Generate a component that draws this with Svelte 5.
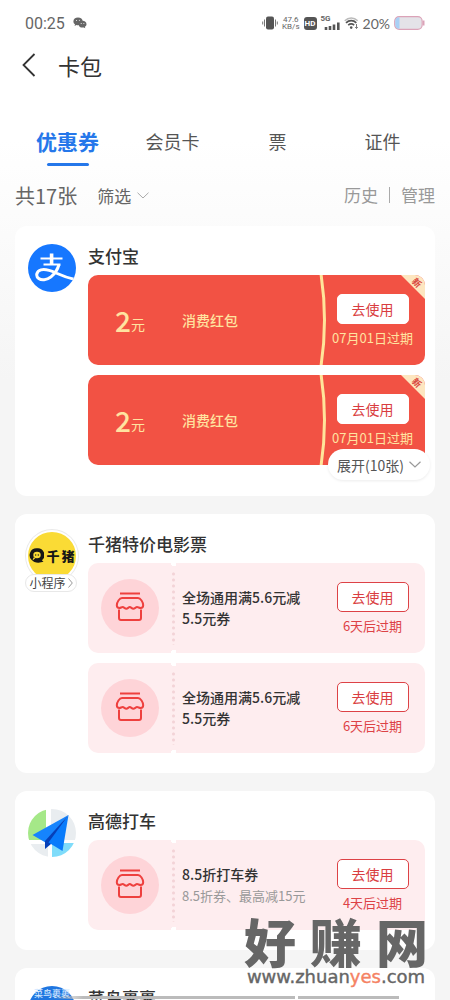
<script lang="ts">
  type Coupon = {
    kind: 'cash' | 'shop'
    title: string
    note?: string
    expiry: string
  }

  type Merchant = {
    id: string
    name: string
    mini?: boolean
    more?: number
    coupons: Coupon[]
  }

  const tabs = ['优惠券', '会员卡', '票', '证件']
  let active = $state(0)

  const merchants: Merchant[] = [
    {
      id: 'alipay',
      name: '支付宝',
      more: 10,
      coupons: [
        { kind: 'cash', title: '消费红包', expiry: '07月01日过期' },
        { kind: 'cash', title: '消费红包', expiry: '07月01日过期' },
      ],
    },
    {
      id: 'qianzhu',
      name: '千猪特价电影票',
      mini: true,
      coupons: [
        { kind: 'shop', title: '全场通用满5.6元减5.5元券', expiry: '6天后过期' },
        { kind: 'shop', title: '全场通用满5.6元减5.5元券', expiry: '6天后过期' },
      ],
    },
    {
      id: 'gaode',
      name: '高德打车',
      coupons: [
        { kind: 'shop', title: '8.5折打车券', note: '8.5折券、最高减15元', expiry: '4天后过期' },
      ],
    },
    { id: 'cainiao', name: '菜鸟裹裹', coupons: [] },
  ]
</script>

<div class="screen">
  <div class="status">
    <span class="clock">00:25</span>
    <svg width="14" height="12" viewBox="0 0 14 12">
      <path d="M5 0.5C2.3 0.5 0.4 2.2 0.4 4.4c0 1.2 0.6 2.2 1.6 2.9L1.6 8.9l1.8-0.9c0.5 0.1 1 0.2 1.6 0.2 2.7 0 4.7-1.7 4.7-3.9S7.7 0.5 5 0.5z" fill="#666" />
      <path d="M9.5 3.8c-2.3 0-4 1.5-4 3.4s1.7 3.4 4 3.4c0.5 0 0.9-0.1 1.3-0.2l1.5 0.9-0.4-1.5c1-0.6 1.6-1.5 1.6-2.6 0-1.9-1.7-3.4-4-3.4z" fill="#666" />
      <circle cx="3.5" cy="3.4" r="0.5" fill="#fff" /><circle cx="6.4" cy="3.2" r="0.5" fill="#fff" />
      <circle cx="8.2" cy="6.4" r="0.5" fill="#fff" /><circle cx="10.9" cy="6.4" r="0.5" fill="#fff" />
    </svg>
    <div class="signals">
      <svg width="16" height="14" viewBox="0 0 16 14">
        <rect x="4" y="0.5" width="8" height="13" rx="2" fill="#555" />
        <path d="M2.5 3.5v7M13.5 3.5v7M0.7 5.5v3M15.3 5.5v3" stroke="#777" stroke-width="1" />
      </svg>
      <span class="speed"><span>47.6</span><span>KB/s</span></span>
      <span class="hd">HD</span>
      <span class="cell">
        <span class="gen">5G</span>
        <svg width="16" height="8" viewBox="0 0 16 8">
          <path d="M2 8V5M6 8V4M10 8V2.5M14.3 8V0.5" stroke="#555" stroke-width="2.6" />
        </svg>
      </span>
      <svg width="15" height="12" viewBox="0 0 15 12">
        <path d="M0.7 3.8C4.5 0 10 0 13.7 3.8" fill="none" stroke="#bbb" stroke-width="1.4" />
        <path d="M2 5.8C5 3 9.5 3 12.3 5.8M4.2 8.2c1.8-1.5 4.2-1.5 6 0" fill="none" stroke="#555" stroke-width="1.7" />
        <circle cx="7.2" cy="10.6" r="1.3" fill="#555" />
        <path d="M12.5 7v4.5M11.2 10l1.3 1.5L13.8 10" fill="none" stroke="#777" stroke-width="1" />
      </svg>
      <span class="percent">20%</span>
      <svg width="31" height="14" viewBox="0 0 31 14">
        <rect x="0.7" y="0.7" width="27.5" height="12.6" rx="4.5" fill="#e4e3e8" stroke="#dba3b8" stroke-width="1.2" />
        <path d="M5.5 1.3H5A3.8 3.8 0 0 0 1.3 5v4A3.8 3.8 0 0 0 5 12.7h0.5z" fill="#a9d0f5" />
        <path d="M29.7 4.5v5" stroke="#dba3b8" stroke-width="1.6" />
      </svg>
    </div>
  </div>

  <header class="bar">
    <button class="back" aria-label="返回">
      <svg width="14" height="24" viewBox="0 0 14 24">
        <path d="M12.5 1L1.5 12l11 11" fill="none" stroke="#333" stroke-width="1.8" />
      </svg>
    </button>
    <h1>卡包</h1>
  </header>

  <nav class="tabs">
    {#each tabs as tab, i}
      <button class="tab" class:active={active === i} onclick={() => (active = i)}>{tab}</button>
    {/each}
  </nav>

  <div class="filters">
    <span class="total">共17张</span>
    <button class="filter">
      筛选
      <svg width="12" height="7" viewBox="0 0 12 7">
        <path d="M0.5 0.7L6 6l5.5-5.3" fill="none" stroke="#aaa" />
      </svg>
    </button>
    <div class="links">
      <a href="#history">历史</a>
      <a href="#manage">管理</a>
    </div>
  </div>

  <main class="list">
    {#each merchants as m}
      <section class="card" class:has-more={m.more}>
        <div class="brand">
          {#if m.id === 'alipay'}
            <svg class="logo" viewBox="0 0 48 48">
              <clipPath id="alipay-clip"><circle cx="24" cy="24" r="24" /></clipPath>
              <circle cx="24" cy="24" r="24" fill="#1677ff" />
              <g fill="none" stroke="#fff" clip-path="url(#alipay-clip)">
                <path d="M12.5 14.5h22M15.5 20.5h17" stroke-width="2.2" />
                <path d="M23.6 9.5v11" stroke-width="3.6" />
                <path d="M31 20.5c-1.5 5.5-4.5 9.5-8 12.3-4.5 3.5-9.5 3.7-12.3 1.7-3.4-2.5-2.2-7.3 2.3-8.6 4.5-1.3 9.5 0.6 15 3.1 6 2.7 11.5 5 20 6.8" stroke-width="3" />
              </g>
            </svg>
          {:else if m.id === 'qianzhu'}
            <div class="logo ring">
              <div class="pig">
                <svg width="15" height="15" viewBox="0 0 15 15">
                  <path d="M7.5 0.3A6.8 6.8 0 0 0 2.5 11.8C4 13.8 7 14.8 9.5 14.7l5-0.9-1.6-1.5A6.8 6.8 0 0 0 7.5 0.3z" fill="#171717" />
                  <ellipse cx="8" cy="7" rx="3.7" ry="3.2" fill="#fadb35" />
                  <path d="M4.5 9.5L3.5 12.5l3-2.5z" fill="#fadb35" />
                  <circle cx="6.7" cy="7" r="0.7" fill="#171717" /><circle cx="9.3" cy="7" r="0.7" fill="#171717" />
                </svg>
                <span>千</span><span>猪</span>
              </div>
            </div>
          {:else if m.id === 'gaode'}
            <svg class="logo" viewBox="0 0 48 48">
              <clipPath id="gaode-clip"><circle cx="24" cy="24" r="24" /></clipPath>
              <g clip-path="url(#gaode-clip)">
                <path d="M0 0h48v48H0z" fill="#fff" />
                <path d="M0 0h18v31H0z" fill="#a5e888" />
                <path d="M23 0h25v31H23zM0 35h20v13H0z" fill="#e9edf0" />
                <path d="M24 34h24v14H24z" fill="#7fdcfa" />
              </g>
              <path d="M40.5 6L4.5 26l13 7.5z" fill="#1684fd" />
              <path d="M40.5 6L17 32v8l6-5z" fill="#0640b8" />
              <path d="M40.5 6L20.5 33.5 34.5 42z" fill="#087bfb" />
            </svg>
          {:else}
            <svg class="logo" viewBox="0 0 48 48">
              <circle cx="24" cy="24" r="24" fill="#1f76e0" />
              <text class="logo-text" x="24" y="11" text-anchor="middle">菜鸟裹裹</text>
              <ellipse cx="24" cy="22" rx="11" ry="8" fill="#e4f2ff" />
            </svg>
          {/if}
          {#if m.mini}
            <a class="mini" href="#mini">
              小程序
              <svg width="5" height="10" viewBox="0 0 5 10">
                <path d="M0.5 0.5L4.3 5 0.5 9.5" fill="none" stroke="#999" />
              </svg>
            </a>
          {/if}
        </div>

        <div class="content">
          <h2>{m.name}</h2>
          <div class="coupons">
            {#each m.coupons as c}
              <article class="coupon {c.kind}">
                <div class="face">
                  {#if c.kind === 'cash'}
                    <span class="amount">2</span><span class="unit">元</span>
                  {:else}
                    <span class="disc">
                      <svg width="30" height="30" viewBox="0 0 30 30">
                        <g fill="none" stroke="#ee403e" stroke-width="2" stroke-linejoin="round">
                          <path d="M5 2.5h20" />
                          <path d="M7 7h16c2.5 0 5.2 4.2 5.2 7.3 0 2-1.2 2.7-2.5 2.7-1.5 0-2.5-0.9-3.7-0.9s-2.2 1.6-3.7 1.6-2.2-1.6-3.5-1.6-2 1.6-3.5 1.6-2.3-1.6-3.6-1.6S5.800 17 4.3 17 1.8 16.3 1.8 14.3C1.8 11.2 4.5 7 7 7z" />
                          <path d="M4 18.5V27c0 1.3 0.7 2 2 2h18c1.3 0 2-0.7 2-2v-8.5" />
                        </g>
                      </svg>
                    </span>
                  {/if}
                </div>
                <div class="info">
                  <h3>{c.title}</h3>
                  {#if c.note}<p>{c.note}</p>{/if}
                </div>
                <div class="action">
                  <button class="use">去使用</button>
                  <span class="expiry">{c.expiry}</span>
                </div>
                {#if c.kind === 'cash'}
                  <svg class="arc" width="8" height="90" viewBox="0 0 8 90">
                    <path d="M2 -1Q9 45 2 91" fill="none" stroke="#ffe49a" stroke-width="3" />
                  </svg>
                  <span class="ribbon"><span>新</span></span>
                {/if}
              </article>
            {/each}
          </div>
          {#if m.more}
            <button class="more">
              展开({m.more}张)
              <svg width="12" height="7" viewBox="0 0 12 7">
                <path d="M0.5 0.7L6 6l5.5-5.3" fill="none" stroke="#999" stroke-width="1.2" />
              </svg>
            </button>
          {/if}
        </div>
      </section>
    {/each}
  </main>

  <div class="home-bar"><span></span><span></span></div>

  <div class="mark">
    <div class="mark-name"><span>好</span><span>赚</span><span>网</span></div>
    <div class="mark-url">www.zhuan<em>yes</em>.com</div>
  </div>
</div>

<style>
  :global(body) {
    background: #f5f5f5;
  }

  .screen {
    position: relative;
    height: 100vh;
    overflow: hidden;
    background: linear-gradient(#fff 0, #fff 140px, #f5f5f5 380px);
    color: #333;
    font-family: "Noto Sans CJK SC", sans-serif;
  }

  h1, h2, h3, p {
    margin: 0;
  }

  button {
    border: 0;
    padding: 0;
    background: none;
    color: inherit;
    font: inherit;
    cursor: pointer;
  }

  a {
    color: inherit;
    text-decoration: none;
  }

  svg {
    display: block;
    flex: none;
  }

  .status {
    display: flex;
    align-items: center;
    height: 46px;
    padding: 0 25px;
    gap: 8px;
    color: #666;
    font-family: Roboto, sans-serif;
  }
  .clock { font-size: 16px; }
  .signals {
    display: flex;
    align-items: center;
    gap: 4px;
    margin-left: auto;
  }
  .speed {
    display: flex;
    flex-direction: column;
    font-size: 8px;
    line-height: 7px;
    text-align: center;
  }
  .hd {
    width: 13px;
    border-radius: 3px;
    background: #555;
    color: #fff;
    font-size: 8px;
    font-weight: 700;
    line-height: 13px;
    text-align: center;
  }
  .cell {
    display: flex;
    flex-direction: column;
    align-items: flex-end;
    width: 19px;
  }
  .gen {
    align-self: flex-start;
    font-size: 8px;
    font-weight: 700;
    line-height: 6px;
  }
  .percent {
    font-family: Lato, sans-serif;
    font-size: 14px;
  }

  .bar {
    display: flex;
    align-items: center;
    height: 38px;
    padding: 0 22px;
    gap: 22px;
  }
  h1 {
    font-size: 22px;
    font-weight: 400;
    line-height: 32px;
  }

  .tabs {
    display: grid;
    grid-template-columns: repeat(4, 1fr);
    height: 56px;
    margin-top: 25px;
    padding: 0 15px;
  }
  .tab {
    display: flex;
    flex-direction: column;
    align-items: center;
    padding-top: 16px;
    color: #555;
    font-size: 18px;
    line-height: 32px;
  }
  .tab.active {
    color: #2577ea;
    font-size: 21px;
    font-weight: 700;
  }
  .tab.active::after {
    content: '';
    width: 42px;
    height: 3px;
    margin-top: 6px;
    border-radius: 2px;
    background: #2577ea;
  }

  .filters {
    display: flex;
    align-items: center;
    height: 60px;
    margin-bottom: 1px;
    padding: 0 15px;
    color: #666;
  }
  .total { font-size: 20px; }
  .filter {
    display: flex;
    align-items: center;
    gap: 6px;
    margin-left: 20px;
    font-size: 17px;
  }
  .links {
    display: flex;
    margin-left: auto;
    color: #999;
    font-size: 17px;
    line-height: 16px;
  }
  .links a + a {
    margin-left: 11px;
    padding-left: 11px;
    border-left: 1px solid #aaa;
  }

  .list {
    display: flex;
    flex-direction: column;
    gap: 18px;
    padding: 0 15px;
  }

  .card {
    display: flex;
    gap: 12px;
    padding: 0 10px 20px 13px;
    border-radius: 12px;
    background: #fff;
  }
  .card.has-more { padding-bottom: 31px; }

  .brand {
    position: relative;
    flex: none;
    width: 48px;
    padding-top: 18px;
  }
  .logo {
    width: 48px;
    height: 48px;
  }
  .logo-text {
    fill: #d3e8ff;
    font-size: 9px;
    font-weight: 500;
  }
  .ring {
    border-radius: 50%;
    background: #fadb35;
    box-shadow: 0 0 0 2px #fff, 0 0 0 3px #eaeaea;
  }
  .pig {
    display: flex;
    align-items: center;
    justify-content: center;
    height: 46px;
    gap: 2px;
    color: #171717;
    font-size: 13px;
    font-weight: 900;
    white-space: nowrap;
  }
  .mini {
    position: absolute;
    top: 60px;
    left: -3px;
    display: flex;
    align-items: center;
    justify-content: center;
    gap: 2px;
    width: 50px;
    height: 16px;
    border: 1px solid #e8e8e8;
    border-radius: 9px;
    background: #fff;
    color: #444;
    font-size: 12px;
    line-height: 16px;
    white-space: nowrap;
  }

  .content {
    position: relative;
    flex: 1;
    min-width: 0;
  }
  h2 {
    height: 32px;
    padding-top: 17px;
    font-size: 17px;
    font-weight: 500;
    line-height: 26px;
  }
  .coupons {
    display: flex;
    flex-direction: column;
    gap: 10px;
  }

  .coupon {
    position: relative;
    display: grid;
    grid-template-columns: 86px 1fr 105px;
    height: 90px;
    border-radius: 10px;
    overflow: hidden;
  }
  .cash {
    background: #f25244;
    color: #ffe3a0;
  }
  .shop {
    background: #feedef;
  }
  /* notches at both ends of the tear line */
  .shop::before {
    content: '';
    position: absolute;
    top: -3px;
    bottom: -3px;
    left: 83px;
    width: 5px;
    background:
      radial-gradient(circle at 3px 3px, #fff 3px, transparent 3px) top / 5px 6px no-repeat,
      radial-gradient(circle at 3px 3px, #fff 3px, transparent 3px) bottom / 5px 6px no-repeat;
  }
  .shop .face::after {
    content: '';
    position: absolute;
    top: 8px;
    bottom: 8px;
    left: 84px;
    width: 3px;
    background: radial-gradient(circle, #f3d3d7 1px, transparent 2px) top / 3px 6px repeat-y;
  }

  .face {
    display: flex;
    align-items: center;
    justify-content: center;
    padding-right: 2px;
  }
  .amount {
    font-size: 28px;
    font-weight: 500;
    line-height: 40px;
  }
  .unit {
    margin-top: 8px;
    font-size: 14px;
  }
  .disc {
    display: grid;
    place-items: center;
    width: 58px;
    height: 58px;
    border-radius: 50%;
    background: #fed4d8;
  }
  .disc svg { margin-bottom: 4px; }

  .info {
    display: flex;
    flex-direction: column;
    justify-content: center;
    padding: 0 8px;
  }
  h3 {
    font-size: 14px;
    font-weight: 500;
    line-height: 21px;
  }
  .info p {
    color: #999;
    font-size: 13px;
    line-height: 21px;
    white-space: nowrap;
  }

  .action {
    display: flex;
    flex-direction: column;
    align-items: center;
    gap: 4px;
    padding-top: 19px;
    color: #dd4246;
  }
  .use {
    box-sizing: border-box;
    width: 72px;
    height: 30px;
    border: 1px solid #dd4246;
    border-radius: 5px;
    background: #fff;
    color: #d93d40;
    font-size: 14px;
    line-height: 28px;
  }
  .cash .use { border-color: #fff; }
  .expiry {
    font-size: 13px;
    line-height: 20px;
    white-space: nowrap;
  }
  .cash .expiry { color: #ffe3a0; }

  .arc {
    position: absolute;
    top: 0;
    right: 98px;
  }
  .ribbon {
    position: absolute;
    top: 0;
    right: 0;
    width: 24px;
    height: 24px;
    background: #fde6c0;
    clip-path: polygon(0 0, 100% 0, 100% 100%);
    color: #d8433c;
  }
  .ribbon span {
    position: absolute;
    top: 3px;
    right: 4px;
    font-size: 9px;
    font-weight: 700;
    line-height: 10px;
    transform: rotate(45deg);
  }

  .more {
    position: absolute;
    right: -5px;
    bottom: -15px;
    display: flex;
    align-items: center;
    justify-content: center;
    gap: 5px;
    width: 102px;
    height: 31px;
    border-radius: 16px;
    background: #fff;
    box-shadow: 0 1px 3px rgba(0, 0, 0, 0.08);
    color: #555;
    font-size: 14px;
  }

  .home-bar {
    position: absolute;
    right: 51px;
    bottom: 1px;
    left: 53px;
    display: flex;
    gap: 3px;
  }
  .home-bar span {
    flex: 5;
    height: 3px;
    background: #bbb;
  }
  .home-bar span:first-child {
    flex: 12;
    background: linear-gradient(90deg, transparent, #bbb 30px);
  }

  .mark {
    position: absolute;
    right: 22px;
    bottom: 15px;
    width: 184px;
    color: #666;
    pointer-events: none;
  }
  .mark-name {
    display: flex;
    justify-content: space-between;
    font-size: 52px;
    font-weight: 900;
    line-height: 56px;
  }
  .mark-url {
    font-family: "DejaVu Sans", sans-serif;
    font-size: 18px;
    line-height: 16px;
    text-align: center;
    white-space: nowrap;
    -webkit-text-stroke: 0.4px;
  }
  .mark-url em {
    color: #f58263;
    font-style: normal;
  }
</style>
